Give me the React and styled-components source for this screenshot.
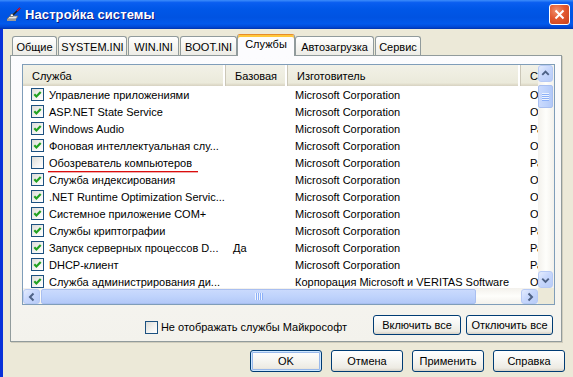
import React from 'react'
import styled, { createGlobalStyle } from 'styled-components'

const GlobalStyle = createGlobalStyle`
  html, body {
    margin: 0;
    padding: 0;
    background: #ECE9D8;
  }
  body {
    font-family: "Liberation Sans", Tahoma, Arial, sans-serif;
    font-size: 11px;
    color: #000;
  }
  * { box-sizing: border-box; }
`

const services = [
  { name: 'Управление приложениями', on: true, base: '', maker: 'Microsoft Corporation', state: 'Остановлена' },
  { name: 'ASP.NET State Service', on: true, base: '', maker: 'Microsoft Corporation', state: 'Остановлена' },
  { name: 'Windows Audio', on: true, base: '', maker: 'Microsoft Corporation', state: 'Работает' },
  { name: 'Фоновая интеллектуальная слу...', on: true, base: '', maker: 'Microsoft Corporation', state: 'Остановлена' },
  { name: 'Обозреватель компьютеров', on: false, marked: true, base: '', maker: 'Microsoft Corporation', state: 'Работает' },
  { name: 'Служба индексирования', on: true, base: '', maker: 'Microsoft Corporation', state: 'Остановлена' },
  { name: '.NET Runtime Optimization Servic...', on: true, base: '', maker: 'Microsoft Corporation', state: 'Остановлена' },
  { name: 'Системное приложение COM+', on: true, base: '', maker: 'Microsoft Corporation', state: 'Остановлена' },
  { name: 'Службы криптографии', on: true, base: '', maker: 'Microsoft Corporation', state: 'Работает' },
  { name: 'Запуск серверных процессов D...', on: true, base: 'Да', maker: 'Microsoft Corporation', state: 'Работает' },
  { name: 'DHCP-клиент', on: true, base: '', maker: 'Microsoft Corporation', state: 'Работает' },
  { name: 'Служба администрирования ди...', on: true, base: '', maker: 'Корпорация Microsoft и VERITAS Software', state: 'Остановлена' },
]

// tab widths follow the reference's Tahoma metrics
const tabs = [
  { label: 'Общие', w: 45 },
  { label: 'SYSTEM.INI', w: 69 },
  { label: 'WIN.INI', w: 51 },
  { label: 'BOOT.INI', w: 57 },
  { label: 'Службы', w: 58, active: true },
  { label: 'Автозагрузка', w: 79 },
  { label: 'Сервис', w: 46 },
]

function Check({ checked }) {
  return (
    <CheckBox>
      {checked && (
        <svg width="11" height="11" viewBox="0 0 11 11">
          <polyline points="2.3,5.2 4.4,7.4 8.7,3" fill="none" stroke="#21A121" strokeWidth="2.2" />
        </svg>
      )}
    </CheckBox>
  )
}

function Arrow({ dir }) {
  const pts = {
    up: '3.5,8 7,4.5 10.5,8',
    down: '3.5,5.5 7,9 10.5,5.5',
    left: '8.5,3.5 5,7 8.5,10.5',
    right: '5.5,3.5 9,7 5.5,10.5',
  }[dir]
  return (
    <svg width="14" height="14" viewBox="0 0 14 14">
      <polyline points={pts} fill="none" stroke="#4D6185" strokeWidth="2" />
    </svg>
  )
}

function App() {
  return (
    <>
      <GlobalStyle />
      <Window>
        <TitleBar>
          <TitleIcon>
            <svg width="16" height="16" viewBox="0 0 16 16">
              <path d="M1 12 L4 9 L12 9 L10 12 Z" fill="#E8E8E8" stroke="#6B6B6B" strokeWidth="0.8" />
              <path d="M1 12 L10 12 L10 14 L1 14 Z" fill="#9A9A9A" />
              <path d="M4 9.5 L5 7 L8 7 L7 9.5 Z" fill="#FFFFFF" stroke="#505050" strokeWidth="0.6" />
              <line x1="7" y1="8" x2="14" y2="1" stroke="#202020" strokeWidth="1.6" />
              <line x1="11" y1="4" x2="14" y2="1" stroke="#D0103A" strokeWidth="1.6" />
            </svg>
          </TitleIcon>
          <TitleText>Настройка системы</TitleText>
          <CloseButton>
            <svg width="11" height="11" viewBox="0 0 11 11">
              <path d="M1.5 1.5 L9.5 9.5 M9.5 1.5 L1.5 9.5" stroke="#fff" strokeWidth="2" />
            </svg>
          </CloseButton>
        </TitleBar>

        <Body>
          <TabStrip>
            {tabs.map((t) => (
              <Tab key={t.label} $w={t.w} $active={t.active}>{t.label}</Tab>
            ))}
          </TabStrip>

          <Panel>
            <ListView>
              <ListArea>
                <Header>
                  <HeadCell>Служба</HeadCell>
                  <HeadCell>Базовая</HeadCell>
                  <HeadCell>Изготовитель</HeadCell>
                  <HeadCell>Состояние</HeadCell>
                </Header>
                {services.map((s) => (
                  <Row key={s.name}>
                    <NameCell>
                      <Check checked={s.on} />
                      <Name $marked={s.marked}>{s.name}</Name>
                    </NameCell>
                    <Cell>{s.base}</Cell>
                    <Cell>{s.maker}</Cell>
                    <Cell $pad={9}>{s.state}</Cell>
                  </Row>
                ))}
              </ListArea>

              <VScroll>
                <ScrollBtn $v><Arrow dir="up" /></ScrollBtn>
                <VTrack>
                  <VThumb><VGrip /></VThumb>
                </VTrack>
                <ScrollBtn $v><Arrow dir="down" /></ScrollBtn>
              </VScroll>

              <HScroll>
                <ScrollBtn><Arrow dir="left" /></ScrollBtn>
                <HTrack>
                  <HThumb><HGrip /></HThumb>
                </HTrack>
                <ScrollBtn><Arrow dir="right" /></ScrollBtn>
              </HScroll>
              <Corner />
            </ListView>

            <PanelFooter>
              <HideLabel>
                <Check checked={false} />
                <span>Не отображать службы Майкрософт</span>
              </HideLabel>
              <Button $w={88}>Включить все</Button>
              <Button $w={87}>Отключить все</Button>
            </PanelFooter>
          </Panel>

          <DialogButtons>
            <Button $w={72} $h={22} $default>OK</Button>
            <Button $w={72} $h={22}>Отмена</Button>
            <Button $w={72} $h={22}>Применить</Button>
            <Button $w={72} $h={22}>Справка</Button>
          </DialogButtons>
        </Body>
      </Window>
    </>
  )
}

const Window = styled.div`
  width: 573px;
  height: 377px;
  overflow: hidden;
  display: flex;
  flex-direction: column;
`

const TitleBar = styled.div`
  height: 29px;
  flex-shrink: 0;
  display: flex;
  align-items: center;
  padding: 0 3px 0 6px;
  background: linear-gradient(180deg, #3D8DFB 0%, #0A5EF0 9%, #0057E8 30%, #0053E2 60%, #0259EC 82%, #0048D6 93%, #0033AE 100%);
`

const TitleIcon = styled.div`
  width: 16px;
  height: 16px;
  margin-right: 3px;
  display: flex;
`

const TitleText = styled.div`
  flex: 1;
  color: #fff;
  font-weight: bold;
  font-size: 13px;
  text-shadow: 1px 1px 0 #0A1883;
  letter-spacing: 0.1px;
`

const CloseButton = styled.div`
  width: 21px;
  height: 21px;
  margin-top: -1px;
  border: 1px solid #fff;
  border-radius: 3px;
  display: flex;
  align-items: center;
  justify-content: center;
  background: radial-gradient(circle at 35% 30%, #F0916E 0%, #E2582F 45%, #C8411B 100%);
`

const Body = styled.div`
  flex: 1;
  display: flex;
  flex-direction: column;
  background: #ECE9D8;
  border-left: 3px solid #0831D9;
  padding: 5px 8px 0 7px;
`

const TabStrip = styled.div`
  display: flex;
  align-items: flex-end;
  height: 22px;
  padding-left: 2px;
  gap: 1px;
  margin-bottom: -1px;
`

const Tab = styled.div`
  position: relative;
  z-index: ${(p) => (p.$active ? 2 : 0)};
  width: ${(p) => p.$w}px;
  height: ${(p) => (p.$active ? '22px' : '20px')};
  padding-bottom: ${(p) => (p.$active ? '3px' : '0')};
  margin: ${(p) => (p.$active ? '0 -1px' : '0')};
  display: flex;
  align-items: center;
  justify-content: center;
  white-space: nowrap;
  border: 1px solid #919B9C;
  border-bottom: none;
  border-top-color: ${(p) => (p.$active ? '#E68B2C' : '#919B9C')};
  border-radius: 3px 3px 0 0;
  background: ${(p) => (p.$active ? '#FCFCFE' : 'linear-gradient(180deg, #FFFFFF 0%, #F7F7F4 40%, #ECEBE5 100%)')};
  box-shadow: ${(p) => (p.$active ? 'inset 0 2px 0 #FFC83C' : 'none')};
`

const Panel = styled.div`
  position: relative;
  height: 287px;
  margin-right: 3px;
  padding: 8px 6px 0 11px;
  border: 1px solid #919B9C;
  background: linear-gradient(180deg, #FCFCFE 0%, #F7F6F3 60%, #F3F2EC 100%);
  box-shadow: 1px 1px 0 #D0CDBD;
`

const ListView = styled.div`
  height: 241px;
  display: grid;
  grid-template-columns: minmax(0, 1fr) 16px;
  grid-template-rows: minmax(0, 1fr) 16px;
  border: 1px solid #7F9DB9;
  background: #fff;
`

const ListArea = styled.div`
  overflow: hidden;
  min-width: 0;
`

const columns = '203px 62px 233px minmax(0, 1fr)'

const Header = styled.div`
  display: grid;
  grid-template-columns: ${columns};
  height: 21px;
  background: linear-gradient(180deg, #F2F1E7 0%, #EBEADB 85%, #E2DECD 92%, #D6D2C2 100%);
`

const HeadCell = styled.div`
  display: flex;
  align-items: center;
  padding-left: 9px;
  white-space: nowrap;
  overflow: hidden;
  border-right: 1px solid #CBC7B8;
  box-shadow: inset -2px 0 0 #FFFFFF;
  &:last-child {
    border-right: none;
    box-shadow: none;
  }
`

const Row = styled.div`
  display: grid;
  grid-template-columns: ${columns};
  height: 17px;
  align-items: center;
`

const NameCell = styled.div`
  display: flex;
  align-items: center;
  padding-left: 8px;
  gap: 5px;
  white-space: nowrap;
`

const Name = styled.span`
  position: relative;
  &::after {
    content: '';
    display: ${(p) => (p.$marked ? 'block' : 'none')};
    position: absolute;
    left: -1px;
    right: -6px;
    bottom: -3px;
    height: 1px;
    background: #DA0E0E;
    box-shadow: 0 1px 0 rgba(218, 14, 14, 0.35);
  }
`

const Cell = styled.div`
  padding-left: ${(p) => p.$pad || 7}px;
  white-space: nowrap;
  overflow: hidden;
`

const CheckBox = styled.span`
  width: 13px;
  height: 13px;
  flex-shrink: 0;
  display: flex;
  align-items: center;
  justify-content: center;
  border: 1px solid #1C5180;
  background: linear-gradient(135deg, #DCDCD7 0%, #F4F4F2 60%, #FFFFFF 100%);
`

const VScroll = styled.div`
  display: flex;
  flex-direction: column;
  background: linear-gradient(90deg, #F3F1EC 0%, #FEFEFB 50%, #F3F1EC 100%);
`

const HScroll = styled.div`
  display: flex;
  background: linear-gradient(180deg, #F3F1EC 0%, #FEFEFB 50%, #F3F1EC 100%);
`

const ScrollBtn = styled.div`
  width: ${(p) => (p.$v ? '15px' : '17px')};
  height: ${(p) => (p.$v ? '17px' : '15px')};
  margin: ${(p) => (p.$v ? '0 1px 0 0' : '1px 0 0 0')};
  flex-shrink: 0;
  display: flex;
  align-items: center;
  justify-content: center;
  border: 1px solid #B7CAF5;
  border-radius: 3px;
  background: linear-gradient(135deg, #E4ECFD 0%, #C7D7FC 45%, #B8CCF8 100%);
`

const VTrack = styled.div`
  flex: 1;
  padding: 3px 1px 0 0;
`

const VThumb = styled.div`
  height: 23px;
  display: flex;
  align-items: center;
  justify-content: center;
  border: 1px solid #A9BFF0;
  border-radius: 2px;
  background: linear-gradient(90deg, #CADAFD 0%, #BFD3FC 50%, #B3C9F8 100%);
`

const VGrip = styled.div`
  width: 7px;
  height: 8px;
  background: repeating-linear-gradient(180deg, #EEF4FE 0 1px, #8CB0F8 1px 2px);
`

const HTrack = styled.div`
  flex: 1;
  padding: 1px 0 0 1px;
`

const HThumb = styled.div`
  width: 435px;
  height: 15px;
  display: flex;
  align-items: center;
  justify-content: center;
  border: 1px solid #A9BFF0;
  border-radius: 2px;
  background: linear-gradient(180deg, #CADAFD 0%, #BFD3FC 50%, #B3C9F8 100%);
`

const HGrip = styled.div`
  width: 8px;
  height: 7px;
  background: repeating-linear-gradient(90deg, #EEF4FE 0 1px, #8CB0F8 1px 2px);
`

const Corner = styled.div`
  background: #ECE9D8;
`

const PanelFooter = styled.div`
  display: flex;
  justify-content: flex-end;
  align-items: center;
  gap: 5px;
  margin-top: 10px;
  padding-right: 2px;
`

const HideLabel = styled.label`
  display: flex;
  align-items: center;
  gap: 3px;
  margin: 4px 21px 0 0;
  white-space: nowrap;
`

const Button = styled.div`
  width: ${(p) => p.$w}px;
  height: ${(p) => p.$h || 20}px;
  display: flex;
  align-items: center;
  justify-content: center;
  white-space: nowrap;
  border: 1px solid #003C74;
  border-radius: 3px;
  background: linear-gradient(180deg, #FFFFFF 0%, #F7F7F4 40%, #EDEBE3 85%, #D6D0C5 100%);
  box-shadow: ${(p) => (p.$default ? 'inset 0 0 0 1px #CEE7FF, inset 0 0 0 2px #98B8EA' : 'none')};
`

const DialogButtons = styled.div`
  display: flex;
  justify-content: flex-end;
  gap: 9px;
  margin-top: 8px;
`

export default App
